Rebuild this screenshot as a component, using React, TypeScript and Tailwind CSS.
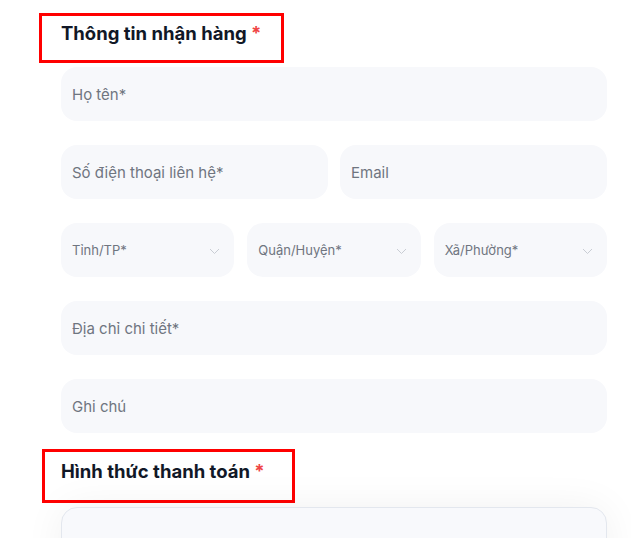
const font = { fontFamily: "Inter, 'Noto Sans', sans-serif" };

function Field({ label }: { label: string }) {
  return (
    <div className="flex h-[54px] flex-1 items-center rounded-2xl bg-[#f7f8fb] pl-[11px] pt-[3px] text-[15px] text-[#6f7580]">
      {label}
    </div>
  );
}

function Select({ label }: { label: string }) {
  return (
    <div className="flex h-[54px] flex-1 items-center justify-between rounded-2xl bg-[#f7f8fb] pl-[11px] pr-[14px] pt-[2px] text-[13px] text-[#6f7580]">
      <span>{label}</span>
      <svg width="11" height="7" viewBox="0 0 11 7" fill="none">
        <path d="M1 1l4.5 4.5L10 1" stroke="#c9cdd4" strokeWidth="1" />
      </svg>
    </div>
  );
}

export default function App() {
  return (
    <div className="min-h-[538px] overflow-hidden bg-white pr-6" style={font}>
      <div className="ml-[39px] mt-[13px] flex h-[50px] w-[245px] border-[3px] border-[#ff0000] pl-[19px] pt-[3px]">
        <h2 className="text-[18.5px] font-bold leading-7 text-[#111827]">
          Thông tin nhận hàng <span className="text-[#ef4444]">*</span>
        </h2>
      </div>

      <div className="ml-[61px] mt-1 flex flex-col gap-6">
        <div className="flex">
          <Field label="Họ tên*" />
        </div>
        <div className="flex gap-3">
          <Field label="Số điện thoại liên hệ*" />
          <Field label="Email" />
        </div>
        <div className="flex gap-[13px]">
          <Select label="Tỉnh/TP*" />
          <Select label="Quận/Huyện*" />
          <Select label="Xã/Phường*" />
        </div>
        <div className="flex">
          <Field label="Địa chỉ chi tiết*" />
        </div>
        <div className="flex">
          <Field label="Ghi chú" />
        </div>
      </div>

      <div className="ml-[42px] mt-4 flex h-[54px] w-[253px] border-[3px] border-[#ff0000] pl-4 pt-[5px]">
        <h2 className="text-[18.5px] font-bold leading-7 text-[#111827]">
          Hình thức thanh toán <span className="text-[#ef4444]">*</span>
        </h2>
      </div>

      <div className="ml-[61px] mt-1 h-[80px] rounded-2xl border border-[#e3e7ee] bg-[#f8f9fc] shadow-[0_0_40px_rgba(15,23,42,0.06)]" />
    </div>
  );
}
